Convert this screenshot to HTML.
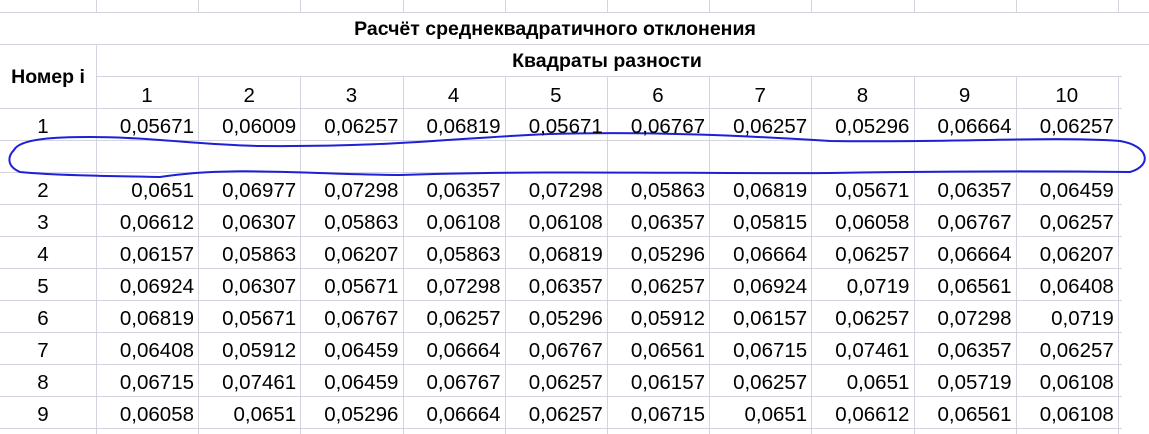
<!DOCTYPE html>
<html><head><meta charset="utf-8"><style>
body{margin:0;width:1149px;height:434px;background:#fff;overflow:hidden;position:relative;font-family:"Liberation Sans",sans-serif;font-size:20.5px;color:#000}
.t{position:absolute;white-space:nowrap;line-height:20px}
</style></head><body>
<svg width="1149" height="434" style="position:absolute;left:0;top:0">
<g stroke="#d4d4df" stroke-width="1" shape-rendering="crispEdges">
<line x1="0" y1="12.5" x2="1149" y2="12.5"/>
<line x1="0" y1="44.5" x2="1149" y2="44.5"/>
<line x1="96" y1="76.5" x2="1122" y2="76.5"/>
</g>
<g id="g" stroke="#d4d4df" stroke-width="1" shape-rendering="crispEdges"></g>
<path d="M14,150 C20,138 60,137 90,137 C150,137 200,145 260,146 C400,147 450,138 550,134 C650,131 750,136 830,141 C950,143 1050,136 1120,141 C1150,146 1152,166 1130,172 C1050,171 950,171 830,173 C700,174 550,170 400,175 C300,174 230,166 160,177 C100,176 50,175 20,172 C6,166 8,156 14,150 Z" fill="none" stroke="#1f1fd6" stroke-width="2"/>
</svg>
<div id="c"></div>
<script>
var g=document.getElementById('g'),s='';
var xs=[];for(var i=0;i<=10;i++)xs.push(96+i*102.2);
xs.forEach(function(x,i){x=Math.round(x)+.5;s+='<line x1="'+x+'" y1="0" x2="'+x+'" y2="12"/>';s+='<line x1="'+x+'" y1="'+(i==0?44:76)+'" x2="'+x+'" y2="434"/>';});
for(var y=108;y<=428;y+=32)s+='<line x1="0" y1="'+(y+.5)+'" x2="1122" y2="'+(y+.5)+'"/>';
g.innerHTML=s;
var d=[["0,05671","0,06009","0,06257","0,06819","0,05671","0,06767","0,06257","0,05296","0,06664","0,06257"],null,
["0,0651","0,06977","0,07298","0,06357","0,07298","0,05863","0,06819","0,05671","0,06357","0,06459"],
["0,06612","0,06307","0,05863","0,06108","0,06108","0,06357","0,05815","0,06058","0,06767","0,06257"],
["0,06157","0,05863","0,06207","0,05863","0,06819","0,05296","0,06664","0,06257","0,06664","0,06207"],
["0,06924","0,06307","0,05671","0,07298","0,06357","0,06257","0,06924","0,0719","0,06561","0,06408"],
["0,06819","0,05671","0,06767","0,06257","0,05296","0,05912","0,06157","0,06257","0,07298","0,0719"],
["0,06408","0,05912","0,06459","0,06664","0,06767","0,06561","0,06715","0,07461","0,06357","0,06257"],
["0,06715","0,07461","0,06459","0,06767","0,06257","0,06157","0,06257","0,0651","0,05719","0,06108"],
["0,06058","0,0651","0,05296","0,06664","0,06257","0,06715","0,0651","0,06612","0,06561","0,06108"]];
var h='';
h+='<div class="t" style="left:0;width:1110px;top:19px;text-align:center;font-weight:bold;font-size:19.5px">Расчёт среднеквадратичного отклонения</div>';
h+='<div class="t" style="left:96px;width:1022px;top:51px;text-align:center;font-weight:bold;font-size:19.5px">Квадраты разности</div>';
h+='<div class="t" style="left:0;width:96px;top:67px;text-align:center;font-weight:bold;font-size:19.5px">Номер i</div>';
for(var j=0;j<10;j++)h+='<div class="t" style="left:'+xs[j]+'px;width:102px;top:86px;text-align:center">'+(j+1)+'</div>';
var lbl=[1,null,2,3,4,5,6,7,8,9];
for(var r=0;r<10;r++){if(!d[r])continue;var y=108+r*32+9;
h+='<div class="t" style="left:0;width:86px;top:'+y+'px;text-align:center">'+lbl[r]+'</div>';
for(var j=0;j<10;j++)h+='<div class="t" style="left:'+xs[j]+'px;width:98px;top:'+y+'px;text-align:right">'+d[r][j]+'</div>';}
document.getElementById('c').innerHTML=h;
</script>
</body></html>
